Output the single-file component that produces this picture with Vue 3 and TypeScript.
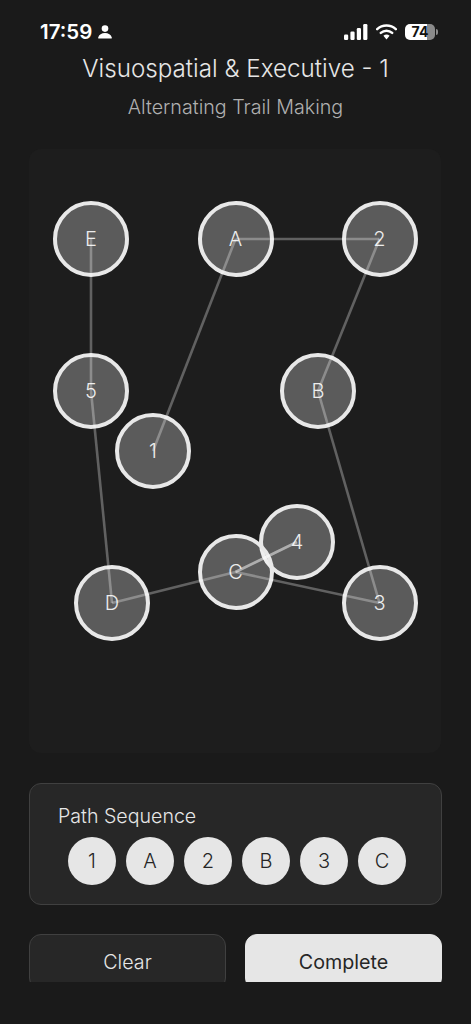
<script setup lang="ts">
interface TrailNode { id: string; x: number; y: number }

const nodes: TrailNode[] = [
  { id: 'E', x: 62, y: 90 },
  { id: 'A', x: 206.5, y: 90 },
  { id: '2', x: 350.5, y: 90 },
  { id: '5', x: 62, y: 242 },
  { id: 'B', x: 289, y: 242 },
  { id: '1', x: 124, y: 302 },
  { id: '4', x: 268, y: 393 },
  { id: 'C', x: 206.5, y: 423 },
  { id: 'D', x: 83, y: 454 },
  { id: '3', x: 350.5, y: 454 }
]

const at = (id: string) => nodes.find((n) => n.id === id) as TrailNode
const route = ['1', 'A', '2', 'B', '3', 'C', '4', 'C', 'D', '5', 'E']
const segments = route.slice(1).map((id, i) => ({ key: i, a: at(route[i]), b: at(id) }))

const sequence = ['1', 'A', '2', 'B', '3', 'C']
</script>

<template>
  <div class="screen">
    <header class="status">
      <div class="status-left">
        <span class="time">17:59</span>
        <svg class="person" viewBox="0 0 14 14" width="14" height="14">
          <circle cx="7" cy="3.6" r="3.3" fill="#fff" />
          <path d="M.8 13.4C.3 13.4 0 13 .2 12.4 1 9.8 3.6 8 7 8s6 1.8 6.8 4.4c.2.6-.1 1-.6 1Z" fill="#fff" />
        </svg>
      </div>
      <div class="status-right">
        <svg viewBox="0 0 24 16" width="24" height="16">
          <rect x="0" y="10.5" width="4.2" height="5.5" rx="1.2" fill="#fff" />
          <rect x="6.4" y="7.5" width="4.2" height="8.5" rx="1.2" fill="#fff" />
          <rect x="12.8" y="4" width="4.2" height="12" rx="1.2" fill="#fff" />
          <rect x="19.2" y="0" width="4.2" height="16" rx="1.2" fill="#fff" />
        </svg>
        <svg viewBox="0 0 21 16" width="21" height="16">
          <path d="M1.2 5.2C6.4.4 14.6.4 19.8 5.2" fill="none" stroke="#fff" stroke-width="2.5" stroke-linecap="round" />
          <path d="M4.8 8.9c3.3-3 8.1-3 11.4 0" fill="none" stroke="#fff" stroke-width="2.5" stroke-linecap="round" />
          <path d="M7.4 11.7 10.5 15.4 13.6 11.7C11.7 10.2 9.3 10.2 7.4 11.7Z" fill="#fff" />
        </svg>
        <div class="battery">
          <div class="battery-body"><span>74</span></div>
          <div class="battery-cap"></div>
        </div>
      </div>
    </header>

    <h1 class="title">Visuospatial &amp; Executive - 1</h1>
    <p class="subtitle">Alternating Trail Making</p>

    <section class="board">
      <div
        v-for="n in nodes"
        :key="n.id"
        class="node"
        :style="{ left: n.x + 'px', top: n.y + 'px' }"
      >{{ n.id }}</div>
      <svg class="trail" viewBox="0 0 412 604" width="412" height="604">
        <line
          v-for="s in segments"
          :key="s.key"
          :x1="s.a.x"
          :y1="s.a.y"
          :x2="s.b.x"
          :y2="s.b.y"
          stroke="#fff"
          stroke-opacity="0.3"
          stroke-width="2.6"
        />
      </svg>
    </section>

    <section class="panel">
      <div class="panel-title">Path Sequence</div>
      <div class="chips">
        <span v-for="s in sequence" :key="s" class="chip">{{ s }}</span>
      </div>
    </section>

    <div class="actions">
      <button class="btn btn-clear" type="button">Clear</button>
      <button class="btn btn-done" type="button">Complete</button>
    </div>
  </div>
</template>

<style>
html, body { margin: 0; background: #1a1a1a; }
</style>

<style scoped>
.screen {
  width: 471px;
  height: 982px;
  overflow: hidden;
  background: #1a1a1a;
  font-family: Inter, "Liberation Sans", sans-serif;
  color: #e6e6e6;
  box-sizing: border-box;
}
.status {
  height: 54px;
  padding: 9px 33px 0 40px;
  display: flex;
  justify-content: space-between;
  align-items: center;
  box-sizing: border-box;
}
.status-left { display: flex; align-items: center; gap: 6px; }
.time { font-size: 20.5px; font-weight: 600; color: #fff; }
.person { display: block; }
.status-right { display: flex; align-items: center; gap: 8px; }
.status-right svg { display: block; }
.battery { display: flex; align-items: center; gap: 1px; }
.battery-body {
  width: 30px;
  height: 16px;
  border-radius: 5px;
  background: linear-gradient(90deg, #fff 0 74%, #8a8a8a 74% 100%);
  color: #111;
  font-size: 14px;
  font-weight: 700;
  line-height: 16px;
  text-align: center;
}
.battery-cap { width: 2px; height: 6px; border-radius: 0 2px 2px 0; background: #8a8a8a; }
.title {
  margin: 0;
  font-size: 24.2px;
  line-height: 30px;
  font-weight: 300;
  text-align: center;
  color: #e6e6e6;
}
.subtitle {
  margin: 11px 0 0;
  font-size: 19.7px;
  line-height: 24px;
  font-weight: 300;
  text-align: center;
  color: #b0b0b0;
}
.board {
  position: relative;
  margin: 30px 30px 0 29px;
  width: 412px;
  height: 604px;
  border-radius: 12px;
  background: #1d1d1d;
}
.trail { position: absolute; left: 0; top: 0; pointer-events: none; }
.node {
  position: absolute;
  width: 76px;
  height: 76px;
  margin: -38px 0 0 -38px;
  box-sizing: border-box;
  border: 4px solid #e8e8e8;
  border-radius: 50%;
  background: rgba(255, 255, 255, 0.28);
  display: flex;
  align-items: center;
  justify-content: center;
  font-size: 20px;
  font-weight: 300;
  color: #ececec;
}
.panel {
  margin: 30px 29px 0;
  height: 122px;
  box-sizing: border-box;
  padding: 20px 25px 0 28px;
  border: 1px solid #404040;
  border-radius: 12px;
  background: #272727;
}
.panel-title { font-size: 19.6px; line-height: 24px; font-weight: 300; color: #e6e6e6; }
.chips { display: flex; justify-content: center; gap: 10px; margin-top: 9px; }
.chip {
  width: 48px;
  height: 48px;
  border-radius: 50%;
  background: #e6e6e6;
  color: #262626;
  display: flex;
  align-items: center;
  justify-content: center;
  font-size: 20px;
  font-weight: 300;
}
.actions { display: flex; gap: 19px; margin: 29px 29px 0; }
.btn {
  flex: 1;
  height: 56px;
  box-sizing: border-box;
  padding: 0;
  border-radius: 12px;
  font-family: inherit;
  font-size: 19.7px;
  font-weight: 300;
}
.btn-clear { background: #272727; border: 1px solid #404040; color: #e6e6e6; }
.btn-done { background: #e6e6e6; border: 1px solid #e6e6e6; color: #262626; font-weight: 400; }
</style>
